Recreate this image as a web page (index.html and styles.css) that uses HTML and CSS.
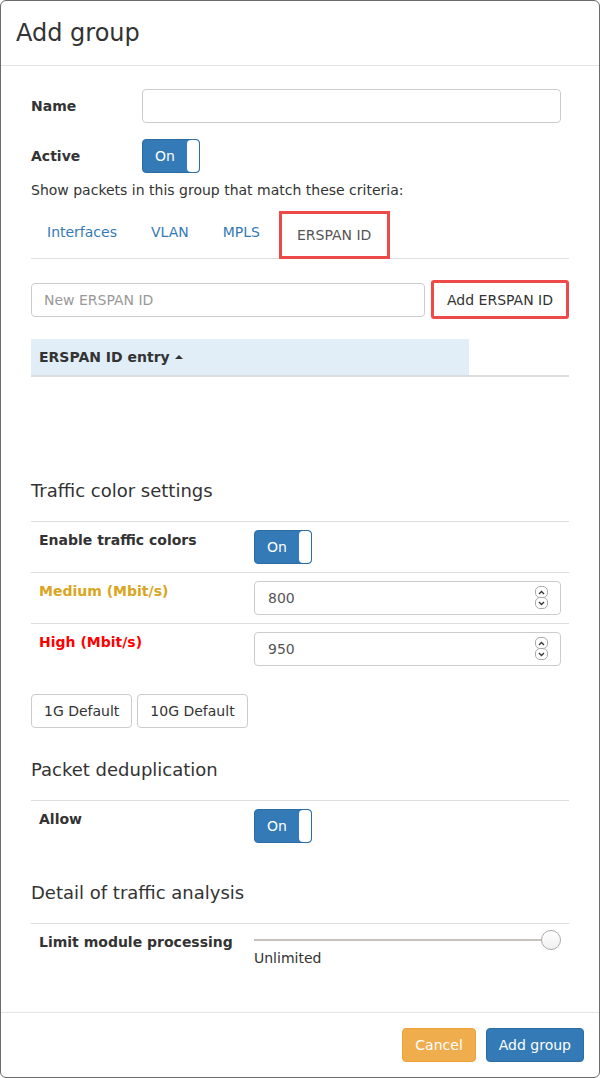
FILE: index.html
```html
<!DOCTYPE html>
<html>
<head>
<meta charset="utf-8">
<title>Add group</title>
<link rel="stylesheet" href="styles.css">
</head>
<body>
<div class="modal">
  <div class="modal-header">
    <h4 class="modal-title">Add group</h4>
  </div>
  <div class="modal-body">
    <div class="form-row">
      <label class="form-label">Name</label>
      <div class="text-input wide"></div>
    </div>
    <div class="form-row last">
      <label class="form-label">Active</label>
      <div class="toggle"><span class="toggle-on">On</span><span class="toggle-handle"></span></div>
    </div>
    <p class="criteria">Show packets in this group that match these criteria:</p>
    <ul class="tabs">
      <li class="tab"><a class="tab-link">Interfaces</a></li>
      <li class="tab"><a class="tab-link">VLAN</a></li>
      <li class="tab"><a class="tab-link">MPLS</a></li>
      <li class="tab active"><a class="tab-link">ERSPAN ID</a></li>
    </ul>
    <div class="add-row">
      <div class="text-input grow placeholder">New ERSPAN ID</div>
      <button class="btn btn-highlight">Add ERSPAN ID</button>
    </div>
    <div class="id-table">
      <div class="id-head">ERSPAN ID entry <span class="sort-up"></span></div>
      <div class="id-head-empty"></div>
    </div>

    <h4 class="section-title">Traffic color settings</h4>
    <div class="settings">
      <div class="set-row">
        <div class="set-label">Enable traffic colors</div>
        <div class="set-value"><div class="toggle"><span class="toggle-on">On</span><span class="toggle-handle"></span></div></div>
      </div>
      <div class="set-row">
        <div class="set-label medium">Medium (Mbit/s)</div>
        <div class="set-value">
          <div class="text-input number">800<span class="spinner"><span class="spin-btn"><svg width="7" height="5" viewBox="0 0 7 5"><path d="M1 4 L3.5 1.5 L6 4" fill="none" stroke="#333" stroke-width="1.3"/></svg></span><span class="spin-btn"><svg width="7" height="5" viewBox="0 0 7 5"><path d="M1 1 L3.5 3.5 L6 1" fill="none" stroke="#333" stroke-width="1.3"/></svg></span></span></div>
        </div>
      </div>
      <div class="set-row">
        <div class="set-label high">High (Mbit/s)</div>
        <div class="set-value">
          <div class="text-input number">950<span class="spinner"><span class="spin-btn"><svg width="7" height="5" viewBox="0 0 7 5"><path d="M1 4 L3.5 1.5 L6 4" fill="none" stroke="#333" stroke-width="1.3"/></svg></span><span class="spin-btn"><svg width="7" height="5" viewBox="0 0 7 5"><path d="M1 1 L3.5 3.5 L6 1" fill="none" stroke="#333" stroke-width="1.3"/></svg></span></span></div>
        </div>
      </div>
    </div>
    <div class="preset-row">
      <button class="btn">1G Default</button>
      <button class="btn">10G Default</button>
    </div>

    <h4 class="section-title">Packet deduplication</h4>
    <div class="settings">
      <div class="set-row">
        <div class="set-label">Allow</div>
        <div class="set-value"><div class="toggle"><span class="toggle-on">On</span><span class="toggle-handle"></span></div></div>
      </div>
    </div>

    <h4 class="section-title">Detail of traffic analysis</h4>
    <div class="settings">
      <div class="set-row">
        <div class="set-label">Limit module processing</div>
        <div class="set-value">
          <div class="slider"><span class="slider-track"></span><span class="slider-thumb"></span></div>
          <div class="slider-caption">Unlimited</div>
        </div>
      </div>
    </div>
  </div>
  <div class="modal-footer">
    <button class="btn btn-warning">Cancel</button>
    <button class="btn btn-primary">Add group</button>
  </div>
</div>
</body>
</html>
```
FILE: styles.css
```css
* { box-sizing: border-box; }
html, body { margin: 0; padding: 0; background: #fff; }
body {
  font-family: "DejaVu Sans", Verdana, sans-serif;
  font-size: 14px;
  line-height: 20px;
  color: #333;
}
.modal {
  width: 600px;
  height: 1078px;
  border: 1px solid #6b6b6b;
  border-radius: 6px;
  display: flex;
  flex-direction: column;
  background: #fff;
}
.modal-header {
  padding: 15px;
  border-bottom: 1px solid #e5e5e5;
}
.modal-title {
  margin: 0;
  font-size: 24px;
  line-height: 34px;
  font-weight: normal;
}
.modal-body {
  flex: 1;
  padding: 23px 30px 0 30px;
}
.form-row {
  display: flex;
  align-items: center;
  margin-bottom: 16px;
}
.form-row.last { margin-bottom: 7px; }
.form-label {
  width: 111px;
  font-weight: bold;
}
.text-input {
  height: 34px;
  border: 1px solid #ccc;
  border-radius: 4px;
  padding: 6px 12px;
  color: #555;
  background: #fff;
}
.text-input.wide { width: 419px; }
.text-input.grow { flex: 1; }
.placeholder { color: #999; }
.toggle {
  width: 58px;
  height: 34px;
  border: 1px solid #2e6da4;
  background: #337ab7;
  border-radius: 4px;
  display: flex;
  align-items: stretch;
}
.toggle-on {
  flex: 1;
  color: #fff;
  display: flex;
  align-items: center;
  justify-content: center;
}
.toggle-handle {
  width: 12px;
  background: #fff;
  border-radius: 4px;
}
.criteria { margin: 0; }
.tabs {
  list-style: none;
  margin: 11px 0 0 0;
  padding: 0;
  display: flex;
  align-items: flex-start;
  border-bottom: 1px solid #ddd;
}
.tab { margin-bottom: -1px; margin-right: 2px; }
.tab-link {
  display: block;
  padding: 11px 16px 10px;
  color: #337ab7;
}
.tab.active { margin-left: 1px; }
.tab.active .tab-link {
  border: 3px solid #ef4a4a;
  padding: 11px 16px 11px 15px;
  color: #555;
}
.add-row {
  display: flex;
  align-items: center;
  gap: 6px;
  margin-top: 21px;
}
.btn {
  font-family: inherit;
  font-size: 14px;
  line-height: 20px;
  height: 34px;
  padding: 6px 12px;
  border: 1px solid #ccc;
  border-radius: 4px;
  background: #fff;
  color: #333;
  margin: 0;
}
.btn-highlight {
  border: 3px solid #ef4a4a;
  height: 39px;
  padding: 6px 13px;
  border-radius: 3px;
}
.id-table {
  display: flex;
  margin-top: 20px;
  border-bottom: 2px solid #ddd;
  margin-bottom: 103px;
}
.id-head {
  width: 438px;
  background: #e1eef7;
  padding: 8px;
  font-weight: bold;
  display: flex;
  align-items: center;
}
.id-head-empty { flex: 1; }
.sort-up {
  display: inline-block;
  width: 0;
  height: 0;
  margin-left: 5px;
  border-left: 4px solid transparent;
  border-right: 4px solid transparent;
  border-bottom: 4px solid #333;
}
.section-title {
  margin: 0 0 20px 0;
  font-size: 18px;
  line-height: 21px;
  font-weight: normal;
}
.set-row {
  display: flex;
  align-items: flex-start;
  border-top: 1px solid #ddd;
  padding: 8px;
}
.set-label {
  width: 215px;
  font-weight: bold;
}
.set-label.medium { color: #daa520; }
.set-label.high { color: #f00; }
.set-value { flex: 1; }
.text-input.number {
  width: 307px;
  position: relative;
  padding-left: 13px;
}
.spinner {
  position: absolute;
  right: 12px;
  top: 4px;
  display: flex;
  flex-direction: column;
}
.spin-btn {
  width: 13px;
  height: 12px;
  border: 1px solid #aaa;
  border-radius: 5px;
  display: flex;
  align-items: center;
  justify-content: center;
  background: #fff;
}
.spin-btn + .spin-btn { margin-top: -1px; }
.preset-row {
  display: flex;
  gap: 5px;
  margin-top: 20px;
  margin-bottom: 31px;
}
.settings + .section-title { margin-top: 31px; }
.slider {
  position: relative;
  width: 307px;
  height: 16px;
}
.slider-track {
  position: absolute;
  left: 0;
  right: 10px;
  top: 7px;
  height: 2px;
  background: #c6c2bd;
}
.slider-thumb {
  position: absolute;
  right: 0;
  top: -2px;
  width: 20px;
  height: 20px;
  border-radius: 50%;
  border: 1px solid #aaa;
  background: linear-gradient(#fff, #f0f0f0);
}
.slider-caption { line-height: 20px; }
.modal-footer {
  border-top: 1px solid #e5e5e5;
  padding: 15px;
  display: flex;
  justify-content: flex-end;
  gap: 10px;
}
.btn-warning {
  background: #f0ad4e;
  border-color: #eea236;
  color: #fff;
}
.btn-primary {
  background: #337ab7;
  border-color: #2e6da4;
  color: #fff;
}
```
